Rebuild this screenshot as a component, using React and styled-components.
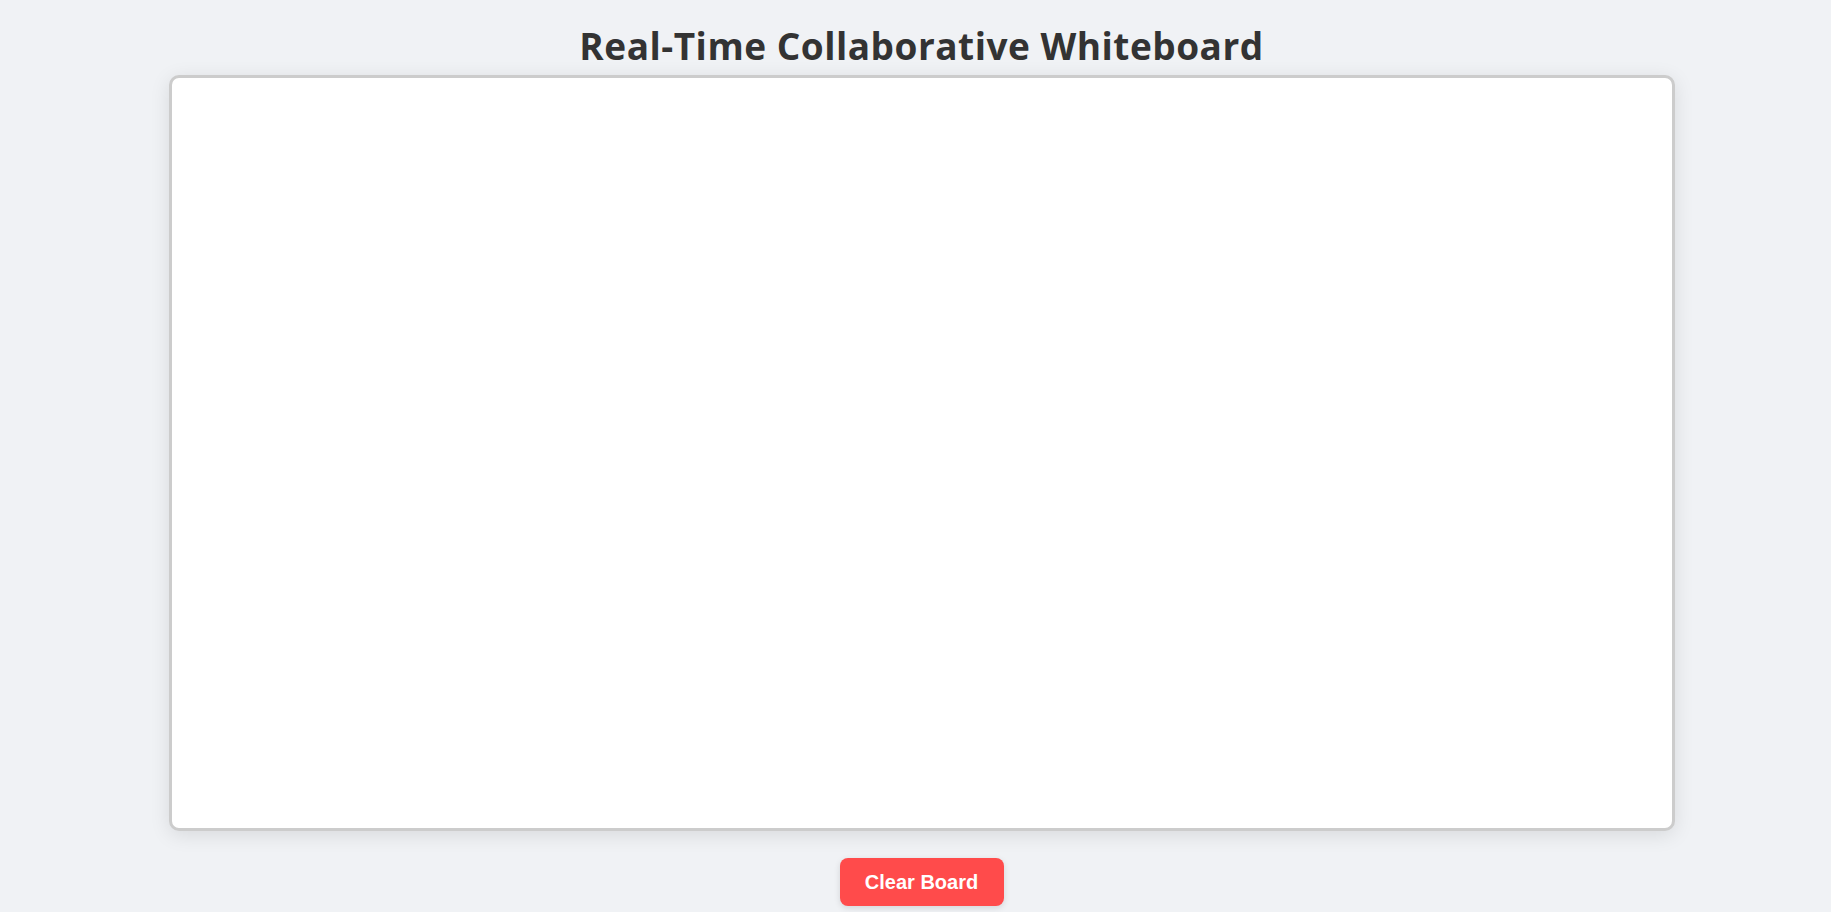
import React, { useRef } from 'react';
import styled, { createGlobalStyle } from 'styled-components';

const GlobalStyle = createGlobalStyle`
  html, body { margin: 0; padding: 0; background: #f0f2f5; overflow: hidden; }
  #root { min-height: 100vh; }
`;

const Page = styled.div`
  display: flex;
  flex-direction: column;
  align-items: center;
  padding: 19px 0 0 12px;
  font-family: "Open Sans", "Noto Sans", sans-serif;
`;

const Title = styled.h1`
  margin: 0 0 2px;
  font-size: 37px;
  line-height: 54px;
  font-weight: 700;
  color: #333;
  letter-spacing: 0.5px;
`;

const Board = styled.canvas`
  display: block;
  width: 1500px;
  height: 750px;
  background: #fff;
  border: 3px solid #ccc;
  border-radius: 10px;
  box-shadow: 0 4px 20px rgba(0, 0, 0, 0.1);
`;

const ClearButton = styled.button`
  margin-top: 27px;
  width: 164px;
  height: 48px;
  border: none;
  border-radius: 8px;
  background: #ff4b4b;
  color: #fff;
  font-family: "Liberation Sans", Arial, sans-serif;
  font-size: 20px;
  font-weight: 700;
  cursor: pointer;
  box-shadow: 0 2px 6px rgba(0, 0, 0, 0.12);
`;

export default function App() {
  const canvasRef = useRef(null);

  const clearBoard = () => {
    const ctx = canvasRef.current?.getContext('2d');
    if (ctx) ctx.clearRect(0, 0, 1500, 750);
  };

  return (
    <>
      <GlobalStyle />
      <Page>
        <Title>Real-Time Collaborative Whiteboard</Title>
        <Board ref={canvasRef} width={1500} height={750} />
        <ClearButton onClick={clearBoard}>Clear Board</ClearButton>
      </Page>
    </>
  );
}
